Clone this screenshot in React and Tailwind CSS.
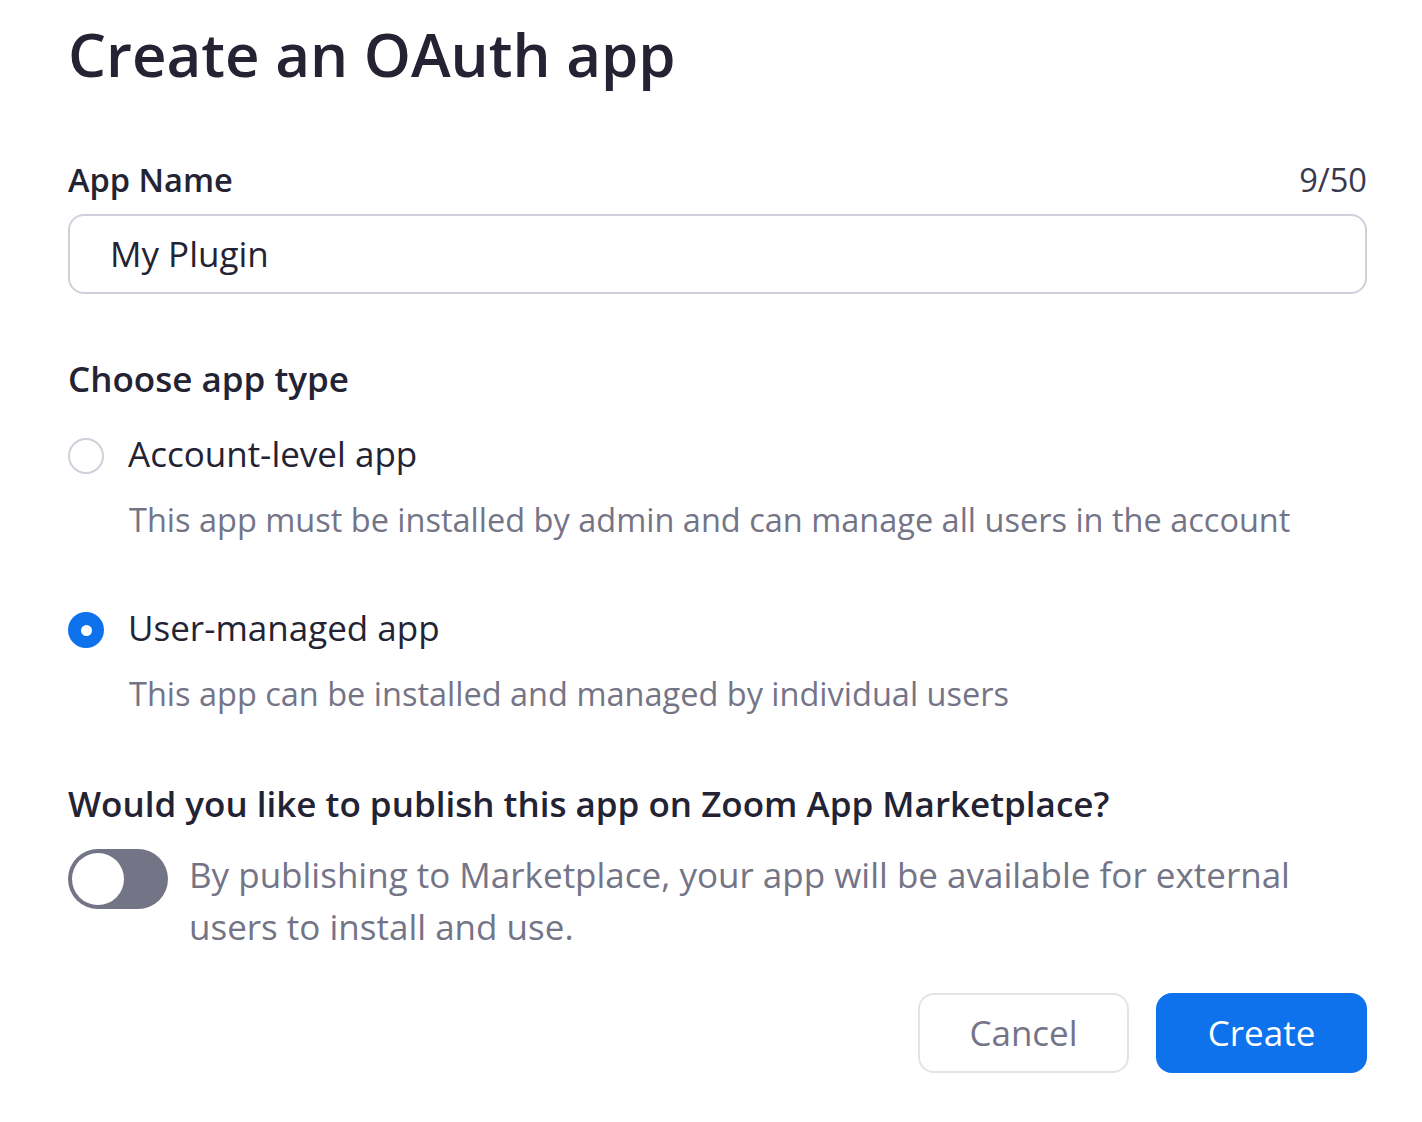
import React, { useState } from 'react';

const App = () => {
  const [appType, setAppType] = useState('user');
  const [publish, setPublish] = useState(false);

  const types = [
    { id: 'account', label: 'Account-level app', desc: 'This app must be installed by admin and can manage all users in the account' },
    { id: 'user', label: 'User-managed app', desc: 'This app can be installed and managed by individual users' },
  ];

  return (
    <div className="min-h-screen bg-white font-['Open_Sans',sans-serif] text-[#232333]">
      <div className="pl-[68px] pr-[55px] pt-[14px]">
        <h1 className="text-[60px] font-semibold leading-[80px]">Create an OAuth app</h1>

        <div className="mt-[66px] flex items-center justify-between">
          <label className="text-[32.6px] font-semibold leading-[40px]">App Name</label>
          <span className="text-[32.6px] leading-[40px] text-[#39394d]">9/50</span>
        </div>
        <div className="mt-[14px] h-[80px] rounded-[16px] border-2 border-[#d0d0dc] flex items-center px-[40px]">
          <span className="text-[35px]">My Plugin</span>
        </div>

        <h2 className="mt-[60px] text-[35px] font-semibold leading-[50px]">Choose app type</h2>

        <div className="mt-[27px] flex flex-col gap-[65px]">
          {types.map((t) => (
            <div key={t.id}>
              <button onClick={() => setAppType(t.id)} className="flex items-center gap-[24px]">
                {appType === t.id ? (
                  <span className="w-[36px] h-[36px] rounded-full bg-[#0e72ed] flex items-center justify-center">
                    <span className="w-[11px] h-[11px] rounded-full bg-white" />
                  </span>
                ) : (
                  <span className="w-[36px] h-[36px] rounded-full border-2 border-[#d0d0dc]" />
                )}
                <span className="text-[35px] leading-[50px] -translate-y-[2px]">{t.label}</span>
              </button>
              <p className="mt-[19px] pl-[61px] text-[32.5px] leading-[40px] text-[#747487]">{t.desc}</p>
            </div>
          ))}
        </div>

        <h2 className="mt-[65px] text-[35px] font-semibold leading-[50px]">Would you like to publish this app on Zoom App Marketplace?</h2>

        <div className="mt-[20px] flex items-start gap-[21px]">
          <button
            onClick={() => setPublish(!publish)}
            className={`shrink-0 w-[100px] h-[60px] rounded-full p-[4px] flex ${publish ? 'bg-[#0e72ed] justify-end' : 'bg-[#747487] justify-start'}`}
          >
            <span className="w-[52px] h-[52px] rounded-full bg-white" />
          </button>
          <p className="text-[35px] leading-[52px] text-[#747487]">
            By publishing to Marketplace, your app will be available for external users to install and use.
          </p>
        </div>

        <div className="mt-[40px] flex justify-end gap-[27px]">
          <button className="w-[211px] h-[80px] rounded-[16px] border-2 border-[#e3e3ea] text-[35px] text-[#747487]">Cancel</button>
          <button className="w-[211px] h-[80px] rounded-[16px] bg-[#0e72ed] text-[35px] text-white">Create</button>
        </div>
      </div>
    </div>
  );
};

export default App;
